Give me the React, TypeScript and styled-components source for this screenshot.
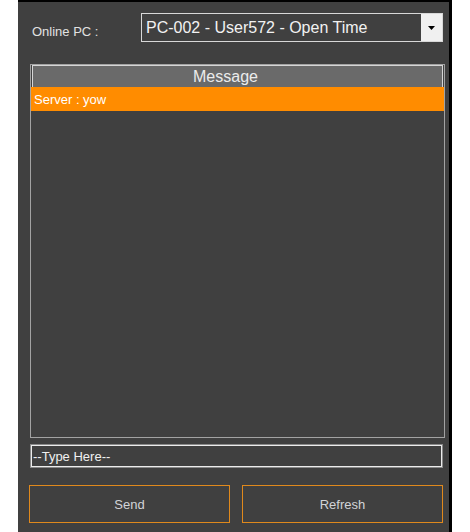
import React from "react";
import styled, { createGlobalStyle } from "styled-components";

const Global = createGlobalStyle`
  html, body { margin: 0; padding: 0; background: #ffffff; }
  body { font-family: "Liberation Sans", Arial, sans-serif; }
  * { box-sizing: border-box; }
`;

const Panel = styled.div`
  margin-left: 18px;
  width: 434px;
  height: 532px;
  background: #404040;
  border-top: 2px solid #000;
  border-right: 3px solid #000;
  padding: 11px 0 0 11px;
  display: flex;
  flex-direction: column;
`;

const TopRow = styled.div`
  display: flex;
  align-items: center;
  height: 29px;
`;

const Label = styled.span`
  width: 112px;
  padding-left: 3px;
  padding-top: 7px;
  font-size: 13px;
  color: #e2e2e2;
`;

const Combo = styled.div`
  display: flex;
  width: 302px;
  height: 29px;
  border: 1px solid #d8d8d8;
  background: #404040;
`;

const ComboText = styled.div`
  flex: 1;
  display: flex;
  align-items: center;
  padding-left: 4px;
  font-size: 16px;
  color: #f2f2f2;
  white-space: nowrap;
`;

const ComboButton = styled.div`
  width: 21px;
  background: #f0f0f0;
  display: flex;
  align-items: center;
  justify-content: center;
`;

const List = styled.div`
  margin-top: 22px;
  margin-left: 1px;
  width: 415px;
  height: 374px;
  border: 1px solid #a3a3a3;
  display: flex;
  flex-direction: column;
`;

const Header = styled.div`
  margin: 0 1px;
  height: 22px;
  background: #6a6a6a;
  border: 1px solid #d6d6d6;
  border-bottom: none;
  display: flex;
  align-items: center;
  justify-content: center;
  padding-right: 24px;
  font-size: 16px;
  color: #ececec;
`;

const Row = styled.div<{ $selected?: boolean }>`
  height: 24px;
  background: ${(p) => (p.$selected ? "#ff8c00" : "transparent")};
  display: flex;
  align-items: center;
  padding-left: 3px;
  font-size: 13px;
  color: #ffffff;
`;

const TextBox = styled.input`
  margin-top: 6px;
  margin-left: 1px;
  width: 413px;
  height: 24px;
  border: 1px solid #8a8a8a;
  box-shadow: inset 0 0 0 1px #ececec;
  background: #404040;
  color: #f0f0f0;
  font-family: "Liberation Sans", Arial, sans-serif;
  font-size: 13px;
  padding: 0 0 0 2px;
  outline: none;
`;

const Buttons = styled.div`
  margin-top: 17px;
  display: grid;
  grid-template-columns: 201px 201px;
  column-gap: 12px;
`;

const Button = styled.button`
  height: 38px;
  border: 1px solid #e0891c;
  background: #404040;
  color: #d2d4d8;
  font-family: "Liberation Sans", Arial, sans-serif;
  font-size: 13px;
  padding: 0;
  cursor: pointer;
`;

export default function App() {
  return (
    <>
      <Global />
      <Panel>
        <TopRow>
          <Label>Online PC :</Label>
          <Combo>
            <ComboText>PC-002 - User572 - Open Time</ComboText>
            <ComboButton>
              <svg width="7" height="4" viewBox="0 0 7 4">
                <polygon points="0,0 7,0 3.5,4" fill="#000" />
              </svg>
            </ComboButton>
          </Combo>
        </TopRow>
        <List>
          <Header>Message</Header>
          <Row $selected>Server : yow</Row>
        </List>
        <TextBox defaultValue="--Type Here--" />
        <Buttons>
          <Button>Send</Button>
          <Button>Refresh</Button>
        </Buttons>
      </Panel>
    </>
  );
}
